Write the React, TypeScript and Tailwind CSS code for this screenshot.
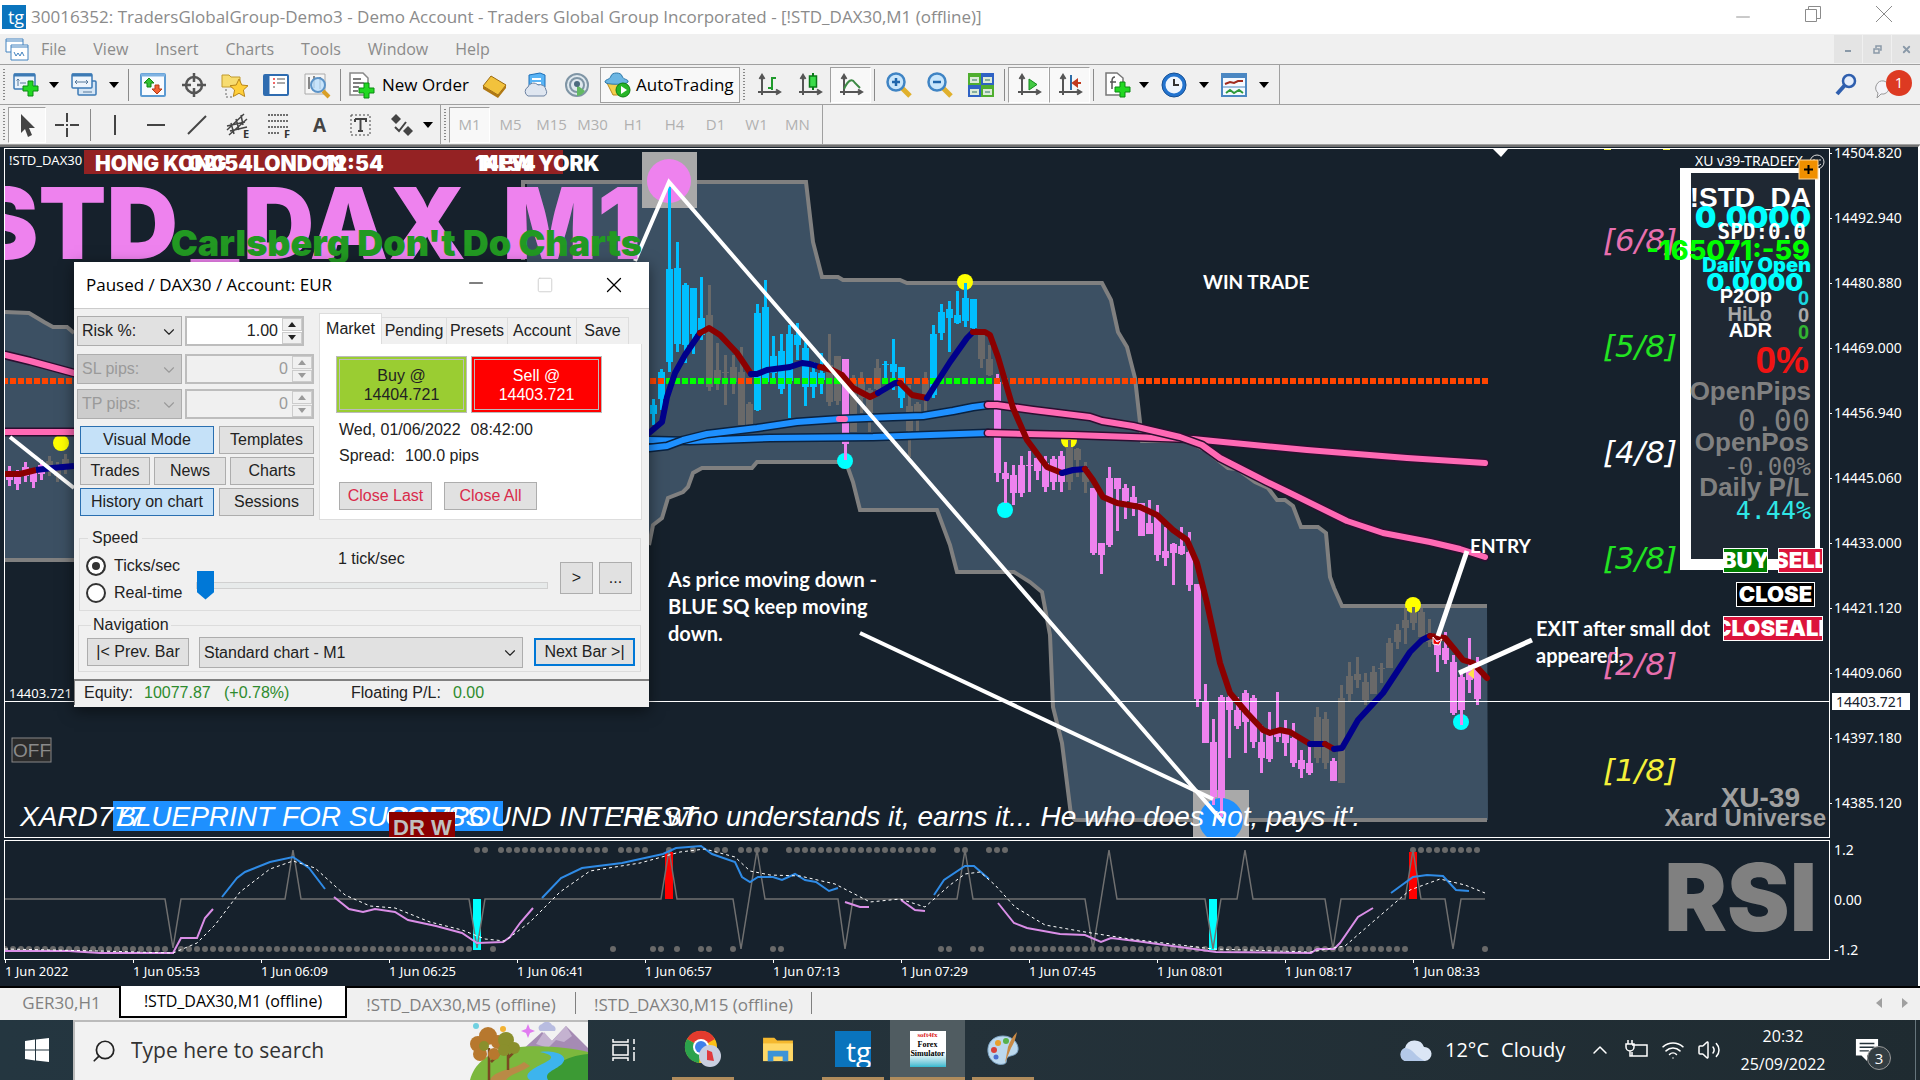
import { ReactNode } from 'react';
import { ChevronDown, ChevronUp, Minus, Search, Square, Volume2, Wifi, X } from 'lucide-react';

/* ---------- chart data ---------- */

const COLORS: Record<string, string> = { c: '#00bfff', g: '#696969', p: '#ee82ee' };

// [kind, high, body top, body bottom, low], one bar every 8px
const candles: [string, number, number, number, number][] = [
    ['c', 399, 405, 414, 425], ['c', 369, 372, 399, 410], ['c', 187, 269, 362, 372], ['c', 242, 268, 344, 352],
    ['c', 283, 285, 345, 363], ['c', 288, 288, 334, 354], ['c', 277, 318, 335, 340], ['g', 285, 315, 387, 391],
    ['g', 343, 370, 380, 390], ['g', 355, 372, 373, 405], ['g', 355, 367, 382, 394], ['g', 347, 372, 425, 425],
    ['g', 402, 404, 425, 425], ['c', 304, 313, 410, 411], ['c', 280, 307, 382, 382], ['c', 336, 356, 373, 378],
    ['c', 334, 351, 389, 394], ['c', 325, 334, 381, 418], ['c', 323, 335, 345, 360], ['c', 342, 348, 387, 406],
    ['c', 362, 372, 387, 398], ['c', 353, 373, 380, 394], ['g', 334, 365, 402, 406], ['g', 356, 356, 401, 405],
    ['p', 359, 359, 444, 460], ['g', 375, 380, 432, 432], ['g', 372, 382, 398, 413], ['g', 388, 390, 422, 432],
    ['g', 359, 368, 389, 393], ['c', 361, 364, 365, 382], ['c', 339, 364, 372, 390], ['c', 367, 367, 398, 408],
    ['g', 385, 406, 431, 457], ['g', 402, 404, 412, 431], ['g', 372, 380, 400, 412], ['c', 325, 334, 395, 398],
    ['c', 304, 312, 333, 340], ['c', 301, 309, 318, 352], ['c', 291, 315, 323, 324], ['c', 283, 298, 321, 327],
    ['c', 299, 299, 328, 332], ['g', 332, 332, 359, 368], ['g', 345, 359, 375, 376], ['p', 374, 382, 473, 482],
    ['p', 462, 473, 479, 503], ['p', 465, 475, 493, 505], ['p', 456, 465, 493, 497], ['p', 451, 465, 466, 492],
    ['p', 455, 458, 471, 480], ['p', 456, 463, 487, 492], ['p', 456, 459, 482, 490], ['p', 451, 456, 482, 492],
    ['g', 440, 447, 482, 490], ['g', 448, 449, 460, 477], ['g', 462, 468, 482, 493], ['p', 488, 488, 553, 555],
    ['p', 543, 543, 555, 574], ['p', 467, 478, 545, 547], ['p', 478, 478, 489, 531], ['p', 484, 488, 501, 519],
    ['p', 486, 497, 503, 516], ['p', 503, 503, 536, 536], ['p', 500, 523, 534, 534], ['p', 505, 517, 555, 561],
    ['p', 527, 551, 558, 566], ['p', 543, 544, 553, 585], ['p', 527, 546, 554, 555], ['p', 532, 552, 585, 591],
    ['p', 584, 584, 699, 707], ['p', 684, 701, 743, 743], ['p', 719, 742, 797, 805], ['p', 695, 697, 798, 817],
    ['p', 692, 697, 710, 758], ['p', 697, 710, 726, 729], ['p', 690, 693, 722, 753], ['p', 695, 698, 742, 748],
    ['p', 725, 742, 758, 773], ['p', 712, 730, 759, 762], ['p', 692, 732, 737, 742], ['p', 720, 730, 743, 756],
    ['p', 723, 738, 763, 767], ['p', 750, 760, 769, 778], ['p', 745, 763, 773, 775], ['g', 707, 717, 758, 763],
    ['g', 712, 719, 763, 769], ['p', 758, 761, 781, 781], ['g', 685, 698, 783, 783], ['g', 662, 676, 694, 702],
    ['g', 657, 674, 680, 688], ['g', 673, 682, 700, 705], ['g', 666, 672, 694, 694], ['g', 663, 668, 669, 683],
    ['g', 638, 643, 668, 668], ['g', 624, 630, 642, 649], ['g', 608, 620, 628, 644], ['g', 607, 613, 623, 630],
    ['g', 608, 612, 637, 638], ['g', 619, 633, 642, 647], ['p', 637, 642, 655, 672], ['p', 632, 648, 660, 664],
    ['p', 655, 662, 713, 715], ['p', 670, 677, 710, 725], ['p', 638, 667, 680, 693], ['p', 657, 667, 699, 705],
];

const CHANNEL_TOP =
    '527,182 806,182 813,242 822,277 838,277 843,280 900,280 907,283 1102,283 1111,300 1118,332 1127,347 1135,378 1140,422 1142,441 1187,441 1205,450 1228,468 1237,469 1255,482 1268,488 1277,500 1285,500 1293,506 1301,527 1318,527 1326,533 1330,577 1334,588 1342,606 1487,606';
const CHANNEL_BOTTOM =
    '1487,820 1075,820 1071,815 1062,743 1053,707 1050,635 1042,592 1030,582 1014,572 957,572 950,545 937,510 860,510 853,482 848,468 843,462 757,462 752,468 702,468 693,473 688,487 683,492 668,498 662,518 653,525 649,545';

const FAST_MA: [string, string][] = [
    ['#00008b', '649,433 662,422 667,397 675,373 685,355 700,333'],
    ['#8b0000', '700,333 709,328 720,335 737,353 751,374'],
    ['#00008b', '751,374 757,374 767,370 790,367 802,363 810,364 820,367'],
    ['#8b0000', '820,367 832,370 842,375 853,388 870,397 878,393'],
    ['#00008b', '878,393 895,383 900,383'],
    ['#8b0000', '900,383 912,395 927,398'],
    ['#00008b', '927,398 950,362 967,338 973,332'],
    ['#8b0000', '973,332 985,332 990,335 998,357 1013,408 1027,440 1047,467 1062,473'],
    ['#00008b', '1062,473 1073,470 1085,469'],
    ['#8b0000', '1085,469 1093,480 1103,497 1117,503 1140,507 1157,515 1173,530 1187,540 1197,563 1207,603 1220,663 1230,693 1247,713 1263,730 1270,733 1280,730 1290,732 1310,744'],
    ['#00008b', '1310,744 1325,744'],
    ['#8b0000', '1325,744 1334,749'],
    ['#00008b', '1334,749 1342,748 1358,720 1383,693 1410,652 1422,640 1430,636'],
    ['#8b0000', '1430,636 1445,638 1455,650 1463,660 1473,663 1487,678'],
];

const SLOW_MA: [string, string][] = [
    ['#1e90ff', '649,440 690,441 770,438 873,437 988,433'],
    ['#ff69b4', '988,433 1073,435 1160,438 1193,439 1213,441 1307,450 1407,458 1485,463'],
    ['#1e90ff', '649,448 667,446 683,440 707,434 757,428 797,422 840,419 893,417 923,416 953,411 973,407 988,405'],
    ['#ff69b4', '988,405 997,405 1033,410 1090,417 1102,421 1133,426 1180,437 1202,445 1220,458 1267,482 1290,493 1347,521 1383,533 1430,542 1460,549 1485,557'],
    ['#ff69b4', '5,355 30,361 74,373'],
    ['#ff69b4', '5,432 74,432'],
];

const RSI_LINES: [string, string][] = [
    ['#da8ee7', '5,951 69,951 100,953 173,953 181,938 197,938 205,918 213,909'],
    ['#2f8be6', '222,897 237,878 245,872 270,862 293,857 309,868 325,889'],
    ['#da8ee7', '334,897 349,909 363,912 375,909 395,912 408,920 436,926 462,933 477,943 503,942 510,937 520,923 533,908'],
    ['#2f8be6', '542,898 561,878 582,868 622,863 663,854 676,848 701,846 712,854 735,862 742,877 750,882 758,877 773,877 782,880 795,874 805,880 816,882 829,891 838,888'],
    ['#da8ee7', '845,902 860,907 869,907'],
    ['#da8ee7', '901,900 915,910 925,911'],
    ['#2f8be6', '934,895 944,880 965,866 974,866 989,879'],
    ['#da8ee7', '998,903 1014,923 1027,928 1060,934 1085,935 1101,942 1111,938 1136,941 1216,952 1311,953 1317,949 1334,949 1340,943 1358,917 1373,908'],
    ['#2f8be6', '1391,893 1413,877 1427,875 1443,876 1456,890 1469,891'],
];

const SIGNAL =
    '5,949 100,951 173,953 197,943 215,925 240,892 270,869 293,861 315,868 345,895 370,906 395,908 430,922 462,930 485,939 505,941 530,922 560,892 590,871 640,863 680,852 705,849 735,857 750,871 770,875 800,876 835,884 870,902 900,899 925,907 950,885 965,874 980,872 995,885 1015,907 1045,925 1085,932 1130,939 1213,949 1310,952 1345,946 1375,920 1410,890 1440,879 1465,885 1485,893';

const SPIKES =
    '5,899 165,899 173,948 181,899 285,899 293,850 301,899 469,899 477,948 485,899 661,899 669,850 677,899 733,899 741,949 757,850 765,899 838,899 845,949 853,899 957,899 965,850 973,899 1085,899 1093,949 1109,850 1117,899 1205,899 1213,949 1221,899 1237,899 1245,850 1253,899 1325,899 1333,949 1341,899 1405,899 1413,850 1421,899 1445,899 1453,949 1461,899 1485,899';

const TOP_DOTS = [[477, 485], [501, 605], [621, 645], [669, 669], [693, 693], [717, 725], [741, 765], [789, 933], [957, 965], [989, 1005], [1413, 1477]];
const BOTTOM_DOTS = [[5, 165], [181, 469], [493, 493], [613, 613], [653, 661], [677, 677], [701, 709], [733, 733], [773, 781], [941, 949], [973, 981], [1013, 1405], [1485, 1485]];

const expand = (ranges: number[][]) => ranges.flatMap(([from, to]) => Array.from({ length: (to - from) / 8 + 1 }, (_, i) => from + i * 8));

const isGreen = (i: number) => (i >= 2 && i <= 10) || (i >= 13 && i <= 23) || i === 29 || i === 30 || (i >= 35 && i <= 42);

const prices = ['14504.820', '14492.940', '14480.880', '14469.000', '14456.940', '14445.060', '14433.000', '14421.120', '14409.060', '14397.180', '14385.120'];
const times = ['1 Jun 2022', '1 Jun 05:53', '1 Jun 06:09', '1 Jun 06:25', '1 Jun 06:41', '1 Jun 06:57', '1 Jun 07:13', '1 Jun 07:29', '1 Jun 07:45', '1 Jun 08:01', '1 Jun 08:17', '1 Jun 08:33'];

const levels = [
    { label: '[6/8]', y: 251, className: 'fill-[#e86fae]' },
    { label: '[5/8]', y: 357, className: 'fill-[#22e322]' },
    { label: '[4/8]', y: 463, className: 'fill-white' },
    { label: '[3/8]', y: 569, className: 'fill-[#22e322]' },
    { label: '[2/8]', y: 675, className: 'fill-[#e86fae]' },
    { label: '[1/8]', y: 781, className: 'fill-[#f4f03a]' },
];

/* ---------- toolbar icons ---------- */

const Icon = ({ children }: { children: ReactNode }) => (
    <svg viewBox="0 0 28 28" className="h-7 w-7 shrink-0" fill="none" aria-hidden="true">
        {children}
    </svg>
);

const Plus = ({ x, y }: { x: number; y: number }) => (
    <path d={`M${x + 5} ${y}h5v5h5v5h-5v5h-5v-5h-5v-5h5z`} fill="#22d822" stroke="#0a8a12" />
);

const Axes = () => <path d="M7 5v19M3 21h21M4.500 8 7 4l2.500 4M21 18.500l4 2.500-4 2.500" stroke="#555" strokeWidth="2" />;

const NewChartIcon = () => (
    <Icon>
        <rect x="2" y="3" width="21" height="15" rx="1" fill="#eaf3fc" stroke="#3c7ab5" strokeWidth="1.500" />
        <path d="M2 4h21" stroke="#3c7ab5" strokeWidth="3" />
        <path d="M6 8v7M4.500 9.500 6 8l1.500 1.500M8 12h6" stroke="#56789a" />
        <Plus x={11} y={10} />
    </Icon>
);
const ProfilesIcon = () => (
    <Icon>
        <rect x="8" y="10" width="18" height="14" rx="1" fill="#d6e6f5" stroke="#3c7ab5" strokeWidth="1.500" />
        <rect x="2" y="3" width="20" height="14" rx="1" fill="#eef5fc" stroke="#3c7ab5" strokeWidth="1.500" />
        <path d="M2 4h20" stroke="#3c7ab5" strokeWidth="3" />
        <path d="M5 11h13M7 9l-2 2 2 2M16 9l2 2-2 2M13 21h9" stroke="#56789a" />
    </Icon>
);
const MarketWatchIcon = () => (
    <Icon>
        <rect x="2" y="3" width="24" height="22" rx="1" fill="#f8fbff" stroke="#5b9ad2" strokeWidth="2" />
        <path d="M2 4h24" stroke="#7fb2e2" strokeWidth="3" />
        <path d="m10 7 5 5h-3v4H8v-4H5z" fill="#33c133" stroke="#128512" />
        <path d="m18 23-5-5h3v-4h4v4h3z" fill="#f26234" stroke="#b53a12" />
    </Icon>
);
const TargetIcon = () => (
    <Icon>
        <circle cx="14" cy="14" r="8" stroke="#555" strokeWidth="2.500" />
        <path d="M14 2v9M14 17v9M2 14h9M17 14h9" stroke="#555" strokeWidth="2.500" />
    </Icon>
);
const NavigatorIcon = () => (
    <Icon>
        <path d="M1 4h7l2 2h9v10H1z" fill="#f7dc70" stroke="#c19a2c" />
        <path d="M5 18v8h6" stroke="#666" strokeDasharray="2 2" />
        <path d="m18 8 2.800 6 6.200.700-4.600 4.300 1.300 6.500-5.700-3.200-5.700 3.200 1.300-6.500L9 14.700l6.200-.700z" fill="#ffcf3a" stroke="#b9861a" />
    </Icon>
);
const TerminalIcon = () => (
    <Icon>
        <rect x="2" y="4" width="24" height="20" rx="1" fill="#fff" stroke="#2f6cb0" strokeWidth="2" />
        <path d="M5 4v20" stroke="#2f6cb0" strokeWidth="5" />
        <path d="M11 8h2M11 12h2" stroke="#e33" strokeWidth="1.500" />
        <path d="M11 16h2M15 8h8M15 12h8" stroke="#555" strokeWidth="1.200" />
    </Icon>
);
const TesterIcon = () => (
    <Icon>
        <path d="M2 3h20v20H2z" fill="#f6f6f6" stroke="#aaa" />
        <path d="M6 6v12M11 5v12M17 6v12" stroke="#888" strokeWidth="2" />
        <circle cx="15" cy="14" r="7" fill="#bfe0fb" fillOpacity=".85" stroke="#5c93c7" strokeWidth="2" />
        <path d="m20 20 6 6" stroke="#d99f26" strokeWidth="4" />
    </Icon>
);
const NewOrderIcon = () => (
    <Icon>
        <path d="M2 2h13l5 5v17H2z" fill="#fff" stroke="#888" strokeWidth="1.500" />
        <path d="M5 8h8M5 12h11M5 16h6M5 20h5" stroke="#555" strokeWidth="1.500" />
        <Plus x={11} y={12} />
    </Icon>
);
const GoldIcon = () => (
    <Icon>
        <path d="m2 15 8-10 15 9-8 10z" fill="#f2c23c" stroke="#9c6a10" />
        <path d="m2 15 15 9v3L2 18zM17 24l8-10v3l-8 10z" fill="#b07812" />
    </Icon>
);
const CloudServerIcon = () => (
    <Icon>
        <path d="M7 4 18 2l5 2v12H7z" fill="#59b4f5" stroke="#1d6fb8" />
        <path d="M10 8h9M10 12h9" stroke="#fff" strokeWidth="2" />
        <path d="M6 25a5 5 0 0 1 0-9 6 6 0 0 1 10-2 6 6 0 0 1 8 5 4 4 0 0 1-2 6z" fill="#dfe6f0" stroke="#6d83a3" />
    </Icon>
);
const SignalIcon = () => (
    <Icon>
        <circle cx="14" cy="14" r="11" fill="#dfe8ee" stroke="#7f95a5" strokeWidth="2" />
        <circle cx="14" cy="14" r="7" stroke="#7f95a5" strokeWidth="2" />
        <path d="M14 14v11a11 11 0 0 0 8-5z" fill="#63b963" />
        <circle cx="14" cy="13" r="3" fill="#4d6b7f" />
    </Icon>
);
const AutoIcon = () => (
    <Icon>
        <path d="M2 10h21l-7 14H9z" fill="#f6cf4c" stroke="#b98a1c" />
        <path d="M1 11c0-3 5-2 6-6s10-4 11 0 7 3 6 6-23 3-23 0z" fill="#6cb6e3" stroke="#2c77a8" />
        <circle cx="19" cy="19" r="7" fill="#27b527" stroke="#0e7d13" />
        <path d="m17 15 6 4-6 4z" fill="#fff" />
    </Icon>
);
const BarsIcon = () => (
    <Icon>
        <Axes />
        <path d="M17 6v13M17 7h4M13 17h4" stroke="#1f9a2c" strokeWidth="2" />
    </Icon>
);
const CandlesIcon = () => (
    <Icon>
        <Axes />
        <path d="M17 2v17" stroke="#0a7a18" strokeWidth="2" />
        <rect x="13.500" y="5" width="7" height="11" fill="#3bdc4a" stroke="#0a7a18" strokeWidth="1.500" />
    </Icon>
);
const LineIcon = () => (
    <Icon>
        <Axes />
        <path d="M7 18c4-9 8-11 11-6l5 5" stroke="#3d8a45" strokeWidth="2" />
    </Icon>
);
const ZoomIcon = ({ plus = false }: { plus?: boolean }) => (
    <Icon>
        <path d="m17 17 8 8" stroke="#e0b02c" strokeWidth="5" />
        <circle cx="11" cy="11" r="8.500" fill="#c9e6fb" stroke="#3f84c4" strokeWidth="2.500" />
        <path d={plus ? 'M7 11h8M11 7v8' : 'M7 11h8'} stroke="#1f66ac" strokeWidth="2.500" />
    </Icon>
);
const TileIcon = () => (
    <Icon>
        <path d="M1 2h13v12H1zM14 14h13v12H14z" fill="#4fae2f" />
        <path d="M14 2h13v12H14zM1 14h13v12H1z" fill="#2f62c4" />
        <path d="M3 6h9v6H3zM16 6h9v6h-9zM3 18h9v6H3zM16 18h9v6h-9z" fill="#dcebd8" />
        <path d="M5 9h5M18 9h5M5 21h5M18 21h5" stroke="#6a9a8a" strokeWidth="1.500" />
    </Icon>
);
const ScrollIcon = () => (
    <Icon>
        <Axes />
        <path d="m14 8 8 5.500-8 5.500z" fill="#43c943" stroke="#148a1e" />
    </Icon>
);
const ShiftIcon = () => (
    <Icon>
        <Axes />
        <path d="M15 4v15" stroke="#2d6da8" strokeWidth="2" />
        <path d="M25 12h-6M21 9l-4 3 4 3z" fill="#d9482b" stroke="#c23a1e" strokeWidth="2" />
    </Icon>
);
const IndicatorIcon = () => (
    <Icon>
        <path d="M2 2h11l6 5v17H2z" fill="#fff" stroke="#777" strokeWidth="1.500" />
        <path d="M11 6c-3 0-3 2-3 4v8M6 11h6" stroke="#555" strokeWidth="1.500" />
        <Plus x={11} y={11} />
    </Icon>
);
const ClockIcon = () => (
    <Icon>
        <circle cx="14" cy="14" r="12" fill="#2374cf" stroke="#164f93" />
        <circle cx="14" cy="14" r="8.500" fill="#eef5fd" />
        <path d="M14 8v6h5" stroke="#333" strokeWidth="2" />
    </Icon>
);
const TemplateIcon = () => (
    <Icon>
        <rect x="2" y="3" width="24" height="22" fill="#f4f9ff" stroke="#4b87c2" strokeWidth="2" />
        <path d="M2 5h24" stroke="#4b87c2" strokeWidth="4" />
        <path d="m5 13 5-2 4 1 4-2 5 0" stroke="#a02a1e" strokeWidth="2" />
        <path d="M2 16h24" stroke="#4b87c2" />
        <path d="m6 22 4-3 4 3 5-3 4 3" stroke="#2f9a3b" strokeWidth="2" />
    </Icon>
);

const drawingTools: [string, ReactNode][] = [
    ['Vertical line', <path key="v" d="M14 4v20" stroke="#444" strokeWidth="2" />],
    ['Horizontal line', <path key="h" d="M5 14h18" stroke="#444" strokeWidth="2" />],
    ['Trendline', <path key="t" d="M5 23 23 5" stroke="#444" strokeWidth="2" />],
    ['Equidistant channel', <g key="e"><path d="M3 19 20 3M5 24 23 8M3 15l18-4M6 20l17-4M7 12l3 11M12 8l3 11M17 4l2 10" stroke="#444" strokeWidth="1.500" /><text x="19" y="27" className="fill-[#333] text-[11px] font-bold">E</text></g>],
    ['Fibonacci', <g key="f"><path d="M3 4h21M3 10h21M3 16h21M3 22h12" stroke="#444" strokeWidth="1.500" strokeDasharray="2 1" /><text x="19" y="27" className="fill-[#333] text-[11px] font-bold">F</text></g>],
    ['Text', <text key="a" x="7" y="21" className="fill-[#444] text-[19px] font-bold">A</text>],
    ['Text label', <g key="l"><rect x="4" y="4" width="19" height="20" stroke="#444" strokeDasharray="2 2" /><path d="M8 8h11v3M8 8v3M13.500 8v12M11 20h5" stroke="#444" strokeWidth="2" /></g>],
    ['Arrows', <g key="s"><path d="m8 3 5 5-5 5-5-5z" fill="#444" /><path d="m20 25-5-5 5-5 5 5z" fill="#444" /><path d="m7 16 4 4 7-9" stroke="#444" strokeWidth="2" /></g>],
];

/* ---------- window chrome ---------- */

const TgLogo = ({ className }: { className: string }) => (
    <span className={`flex items-center justify-center overflow-hidden bg-[#0a74bd] text-white ${className}`}>tg</span>
);

const Tool = ({ label, children, on = false, wide = 'w-[41px]' }: { label: string; children: ReactNode; on?: boolean; wide?: string }) => (
    <button
        aria-label={label}
        className={`flex h-9 shrink-0 items-center justify-center ${wide} ${on ? 'border border-[#a0a0a0] border-r-white border-b-white bg-[#f8f8f8]' : ''}`}
    >
        {children}
    </button>
);

const Caret = () => (
    <button aria-label="More" className="flex w-3 shrink-0 items-center justify-center">
        <svg viewBox="0 0 10 6" className="w-[10px]" aria-hidden="true">
            <path d="M0 0h10L5 6z" />
        </svg>
    </button>
);

const Grip = () => <span className="mx-[3px] h-8 w-[2px] shrink-0 self-center bg-[repeating-linear-gradient(#888_0_1px,#eee_1px_3px)]" />;
const Sep = () => <span className="mx-[3px] h-8 w-px shrink-0 self-center bg-[#8a8a8a]" />;

const TitleBar = () => (
    <header className="flex h-[34px] items-center bg-white text-[#8b8b8b]">
        <TgLogo className="ml-[2px] h-6 w-6 pl-1 text-[18px]" />
        <h1 className="ml-[5px] text-[17px] whitespace-nowrap">
            30016352: TradersGlobalGroup-Demo3 - Demo Account - Traders Global Group Incorporated - [!STD_DAX30,M1 (offline)]
        </h1>
        <div className="ml-auto flex">
            <button aria-label="Minimize" className="flex w-[70px] justify-center"><Minus size={22} strokeWidth={1} /></button>
            <button aria-label="Restore" className="flex w-[70px] justify-center">
                <svg viewBox="0 0 16 16" className="h-4 w-4" fill="none" stroke="currentColor"><path d="M.5 3.500h11v12H.5zM3.500 3V.5h12v12H12" /></svg>
            </button>
            <button aria-label="Close" className="flex w-[72px] justify-center">
                <svg viewBox="0 0 16 16" className="h-4 w-4" stroke="currentColor"><path d="m0 0 16 16M16 0 0 16" /></svg>
            </button>
        </div>
    </header>
);

const MenuBar = () => (
    <nav className="flex h-[31px] items-center border-b border-[#a0a0a0] text-[16px] text-[#8b8b8b]">
        <svg viewBox="0 0 24 24" className="ml-[5px] h-6 w-6" fill="#fff" stroke="#4383c0" aria-hidden="true">
            <path d="M1 2h17v13H1zM1 4h17" />
            <path d="M6 8h17v15H6zM6 10h17" />
            <path d="m9 15 2 4 2-3 2 3 2-4 2 4" fill="none" />
        </svg>
        <ul className="ml-3 flex gap-[27px]">
            {['File', 'View', 'Insert', 'Charts', 'Tools', 'Window', 'Help'].map((item) => (
                <li key={item}><button>{item}</button></li>
            ))}
        </ul>
        <div className="ml-auto flex gap-px text-[#8a99a8]">
            <button aria-label="Minimize chart" className="flex h-7 w-7 items-center justify-center bg-[#e4e4e4]"><span className="mt-1 h-[2px] w-[6px] bg-[#8a99a8]" /></button>
            <button aria-label="Restore chart" className="flex h-7 w-7 items-center justify-center bg-[#e4e4e4]">
                <svg viewBox="0 0 9 9" className="h-[9px] w-[9px]" fill="none" stroke="currentColor" strokeWidth="1.500"><path d="M1 4h5v4H1zM3 3V1h5v4H7" /></svg>
            </button>
            <button aria-label="Close chart" className="flex h-7 w-7 items-center justify-center bg-[#e4e4e4]"><X size={11} strokeWidth={4} /></button>
        </div>
    </nav>
);

const MainToolbar = () => (
    <div className="flex h-10 items-center border-b border-[#a0a0a0] text-[17px] text-black">
        <div className="flex h-full items-center border-r border-[#a0a0a0] pr-[9px]">
            <Grip />
            <Tool label="New chart" wide="w-9"><NewChartIcon /></Tool>
            <span className="w-1" />
            <Caret />
            <Tool label="Profiles" wide="w-12"><ProfilesIcon /></Tool>
            <Caret />
            <span className="w-[5px]" />
            <Sep />
            <Tool label="Market Watch"><MarketWatchIcon /></Tool>
            <Tool label="Data Window"><TargetIcon /></Tool>
            <Tool label="Navigator"><NavigatorIcon /></Tool>
            <Tool label="Terminal"><TerminalIcon /></Tool>
            <Tool label="Strategy Tester"><TesterIcon /></Tool>
            <Sep />
            <button className="flex w-[130px] items-center gap-[6px] pl-1 whitespace-nowrap"><NewOrderIcon />New Order</button>
            <Tool label="MetaEditor"><GoldIcon /></Tool>
            <Tool label="Virtual hosting"><CloudServerIcon /></Tool>
            <Tool label="Signals"><SignalIcon /></Tool>
            <button className="ml-[3px] flex h-9 w-[140px] items-center gap-[4px] border border-[#a0a0a0] bg-[#f8f8f8] pl-[3px] whitespace-nowrap"><AutoIcon />AutoTrading</button>
            <Grip />
            <Tool label="Bar chart"><BarsIcon /></Tool>
            <Tool label="Candlesticks"><CandlesIcon /></Tool>
            <Tool label="Line chart" on><LineIcon /></Tool>
            <Sep />
            <Tool label="Zoom in"><ZoomIcon plus /></Tool>
            <Tool label="Zoom out"><ZoomIcon /></Tool>
            <Tool label="Tile windows"><TileIcon /></Tool>
            <Sep />
            <Tool label="Auto scroll" on><ScrollIcon /></Tool>
            <Tool label="Chart shift" on><ShiftIcon /></Tool>
            <Sep />
            <Tool label="Indicators"><IndicatorIcon /></Tool>
            <Caret />
            <Tool label="Periods" wide="w-12"><ClockIcon /></Tool>
            <Caret />
            <Tool label="Templates" wide="w-12"><TemplateIcon /></Tool>
            <Caret />
        </div>
        <div className="ml-auto flex items-center pr-2">
            <button aria-label="Search">
                <svg viewBox="0 0 24 24" className="h-6 w-6" fill="none" stroke="#2f5fae"><circle cx="15" cy="8" r="6" strokeWidth="2.500" fill="#e6eefb" /><path d="m11 12-8 9" strokeWidth="4" /></svg>
            </button>
            <button aria-label="Alerts" className="ml-4 flex items-center">
                <svg viewBox="0 0 20 20" className="mt-2 -mr-2 h-5 w-5" fill="#f4f4f8" stroke="#999"><path d="M10 2a8 7 0 0 1 0 13H7l-4 4 1-5a7 7 0 0 1 6-12z" /></svg>
                <span className="relative mb-1 flex h-[26px] w-[26px] items-center justify-center rounded-full bg-[#dd3a22] text-[15px] text-white">1</span>
            </button>
        </div>
    </div>
);

const DrawToolbar = () => (
    <div className="flex h-10 items-center border-b border-[#a0a0a0]">
        <div className="flex h-full items-center border-r border-[#a0a0a0] pr-[6px]">
            <Grip />
            <Tool label="Cursor" on wide="w-[38px]">
                <Icon><path d="M8 3v19l4-4 3 8 4-2-3-7h6z" fill="#444" /></Icon>
            </Tool>
            <Tool label="Crosshair">
                <Icon><path d="M14 2v9M14 17v9M2 14h9M17 14h9M14 13v2" stroke="#444" strokeWidth="2" /></Icon>
            </Tool>
            <Sep />
            {drawingTools.map(([label, art]) => (
                <Tool key={label} label={label}><Icon>{art}</Icon></Tool>
            ))}
            <Caret />
        </div>
        <div className="flex h-full items-center border-r border-[#a0a0a0] pr-1 text-[15px] text-[#b0b0b0]">
            <Grip />
            {['M1', 'M5', 'M15', 'M30', 'H1', 'H4', 'D1', 'W1', 'MN'].map((tf) => (
                <Tool key={tf} label={tf} on={tf === 'M1'}>{tf}</Tool>
            ))}
        </div>
    </div>
);

/* ---------- chart ---------- */

const Dot = ({ x, y, fill }: { x: number; y: number; fill: string }) => <circle cx={x} cy={y} r="8" fill={fill} />;

const MainPlot = () => (
    <svg className="absolute inset-0 h-full w-full font-['Liberation_Sans',sans-serif]" fill="none" aria-label="!STD_DAX30 price chart">
        <g transform="translate(-5 -149)">
            <polygon points={`${CHANNEL_TOP} 1488,820 ${CHANNEL_BOTTOM} 527,545`} fill="#3c5063" />
            <polygon points="5,312 29,313 44,322 53,327 67,327 90,340 90,560 5,560" fill="#3c5063" />
            <polyline points="5,312 29,313 44,322 53,327 67,327 74,333" stroke="#808080" strokeWidth="4" />
            <polyline points="5,560 74,560" stroke="#808080" strokeWidth="4" />
            <polyline points={CHANNEL_TOP} stroke="#808080" strokeWidth="4" />
            <polyline points={CHANNEL_BOTTOM} stroke="#808080" strokeWidth="4" />
            <path d="M523 260V182h6" stroke="#808080" strokeWidth="4" />

            <rect x="642" y="152" width="55" height="56" fill="#a9a9a9" />
            <circle cx="669" cy="181" r="22" fill="#ee82ee" />
            <rect x="1193" y="790" width="56" height="50" fill="#a9a9a9" />
            <circle cx="1221" cy="820" r="22" fill="#1e90ff" />

            <Dot x={965} y={282} fill="#ffff00" />
            <Dot x={1069} y={440} fill="#ffff00" />
            <Dot x={1413} y={605} fill="#ffff00" />
            <Dot x={61} y={443} fill="#ffff00" />
            <Dot x={845} y={461} fill="#00ffff" />
            <Dot x={1005} y={510} fill="#00ffff" />
            <Dot x={1461} y={722} fill="#00ffff" />

            {candles.map(([kind, high, top, bottom, low], i) => (
                <g key={i} fill={COLORS[kind]}>
                    <rect x={652 + i * 8} y={high} width="3" height={low - high} />
                    <rect x={650 + i * 8} y={top} width="7" height={bottom - top} />
                </g>
            ))}
            {[466, 470, 462, 468, 460, 456, 462, 454].map((y, i) => (
                <g key={i} fill={i < 5 ? '#ee82ee' : '#696969'}>
                    <rect x={8 + i * 8} y={y} width="3" height="20" />
                    <rect x={6 + i * 8} y={y + 5} width="7" height="9" />
                </g>
            ))}

            {Array.from({ length: 186 }, (_, i) => i - 81).map((i) => (
                <rect key={i} x={650 + i * 8} y="378" width="6" height="6" fill={isGreen(i) ? '#00ff00' : '#ff4500'} />
            ))}

            {SLOW_MA.map(([color, points]) => (
                <g key={points} strokeLinejoin="round" strokeLinecap="round">
                    <polyline points={points} stroke={color === '#1e90ff' ? '#0a2240' : '#2c0f30'} strokeWidth="9" />
                    <polyline points={points} stroke={color} strokeWidth="6" />
                </g>
            ))}
            <path d="M839 419h6" stroke="#ff69b4" strokeWidth="6" strokeLinecap="round" />
            {FAST_MA.map(([color, points]) => (
                <polyline key={points} points={points} stroke={color} strokeWidth="6" strokeLinecap="round" strokeLinejoin="round" />
            ))}
            <polyline points="5,474 20,474 36,470" stroke="#8b0000" strokeWidth="6" />
            <polyline points="36,470 52,468 74,466" stroke="#00008b" strokeWidth="6" />

            <path d="M5 701.500h1825" stroke="#fff" />
            <g stroke="#fff" strokeWidth="4">
                <path d="M635 261 669 182 1223 822" />
                <path d="M10 437 74 488" />
                <path d="m860 633 353 166" />
                <path d="m1467 551-29 85" strokeWidth="5" />
                <path d="m1459 673 73-33" strokeWidth="5" />
            </g>
            <path d="m1433 637 4 5 5-3-3 6-6-1z" fill="#e00" stroke="#fff" />
            <path d="m1474 668-6 6 6 5z" fill="#ffe34d" />
            <path d="M1493 149h15l-7 8z" fill="#fff" />
            <path d="M1604 149h7M1663 149h7" stroke="#f4f03a" strokeWidth="2" />

            <g className="fill-[#ee82ee] font-['Inter',sans-serif] text-[99px] font-black">
                <text x="178" y="259" textAnchor="end">!STD</text>
                <text x="466" y="259" textAnchor="end">_DAX</text>
                <text x="642" y="259" textAnchor="end">M1</text>
            </g>
            <text x="642" y="256" textAnchor="end" className="fill-[#229922] font-['Inter',sans-serif] text-[36px] font-black">Carlsberg Don't Do Charts</text>

            <text x="9" y="165" className="fill-white font-['Noto_Sans',sans-serif] text-[13px]">!STD_DAX30</text>
            <rect x="84" y="150" width="479" height="24" fill="#942223" />
            <g className="fill-white font-['Inter',sans-serif] text-[21px] font-black">
                <text x="95" y="171">HONG KONG</text>
                <text x="188" y="171">02:54</text>
                <text x="253" y="171">LONDON</text>
                <text x="324" y="171">12:54</text>
                <text x="475" y="171">14:54</text>
                <text x="482" y="171">NEW YORK</text>
            </g>

            <g className="fill-white font-['Lato',sans-serif] text-[20px] font-bold">
                <text x="1203" y="289" className="text-[19px]">WIN TRADE</text>
                <text x="668" y="587">As price moving down -</text>
                <text x="668" y="614">BLUE SQ keep moving</text>
                <text x="668" y="641">down.</text>
                <text x="1470" y="553" className="text-[19px]">ENTRY</text>
                <text x="1536" y="636">EXIT after small dot</text>
                <text x="1536" y="663">appeared,</text>
            </g>

            <g className="font-['DejaVu_Sans',sans-serif] text-[31px] italic">
                {levels.map(({ label, y, className }) => (
                    <text key={label} x="1603" y={y} className={className}>{label}</text>
                ))}
            </g>

            <text x="9" y="698" className="fill-white font-['Noto_Sans',sans-serif] text-[13px]">14403.721</text>
            <rect x="12" y="738" width="39" height="24" fill="#2b2b2b" stroke="#888" />
            <text x="13" y="757" className="fill-[#8a8a8a] text-[19px]">OFF</text>
            <rect x="113" y="801" width="390" height="30" fill="#1e90ff" />
            <g className="fill-white text-[28px] italic">
                <text x="20" y="826">XARD777</text>
                <text x="117" y="826">BLUEPRINT FOR SUCCESS</text>
                <text x="385" y="826">COMPOUND INTEREST</text>
                <text x="618" y="826">'He who understands it, earns it... He who does not, pays it'.</text>
            </g>
            <rect x="389" y="812" width="66" height="30" fill="#8b0000" />
            <text x="393" y="835" className="fill-[#c0c0c0] text-[22px] font-bold">DR W</text>

            <path d="M1680 168h140v402h-140z" fill="#fff" />
            <path d="M1691 173h124v386h-124z" fill="#1f2833" />
            <text x="1695" y="166" className="fill-white font-['Noto_Sans',sans-serif] text-[14px]">XU v39-TRADEFX</text>
            <g stroke="#ddd">
                <circle cx="1817" cy="162" r="7" />
                <path d="M1813 164q4 4 8 0M1814 159v2M1820 159v2" />
            </g>
            <rect x="1799" y="160" width="19" height="19" fill="#f09000" stroke="#ffd9a0" />
            <path d="M1804 169.500h9M1808.500 165v9" stroke="#000" strokeWidth="2" />
            <g textAnchor="end">
                <text x="1811" y="207" className="fill-white text-[28px] font-bold">!STD_DA</text>
                <g className="fill-[#00ffff] font-['Inter',sans-serif] font-black">
                    <text x="1811" y="228" className="text-[30px]">0.0000</text>
                    <text x="1811" y="272" className="text-[20px]">Daily Open</text>
                    <text x="1803" y="291" className="text-[25px]">0.0000</text>
                </g>
                <text x="1806" y="239" className="fill-white font-['DejaVu_Sans_Mono',monospace] text-[21px] font-bold">SPD:0.0</text>
                <text x="1810" y="260" className="fill-[#00ff00] font-['Inter',sans-serif] text-[27px] font-extrabold">-165071:-59</text>
                <g className="text-[20px] font-bold">
                    <text x="1772" y="303" className="fill-white">P2Op</text>
                    <text x="1772" y="321" className="fill-[#a9a9a9]">HiLo</text>
                    <text x="1772" y="337" className="fill-white">ADR</text>
                    <text x="1809" y="305" className="fill-[#19d7e0]">0</text>
                    <text x="1809" y="322" className="fill-[#a9a9a9]">0</text>
                    <text x="1809" y="339" className="fill-[#32b432]">0</text>
                </g>
                <text x="1809" y="373" className="fill-[#f01414] text-[37px] font-bold">0%</text>
                <g className="fill-[#808080] text-[26px] font-bold">
                    <text x="1811" y="400">OpenPips</text>
                    <text x="1809" y="451">OpenPos</text>
                    <text x="1809" y="496">Daily P/L</text>
                </g>
                <g className="font-['DejaVu_Sans_Mono',monospace]">
                    <text x="1810" y="431" className="fill-[#808080] text-[30px]">0.00</text>
                    <text x="1811" y="475" className="fill-[#808080] text-[24px]">-0.00%</text>
                    <text x="1811" y="519" className="fill-[#2fe6e6] text-[25px]">4.44%</text>
                </g>
                <g className="fill-[#a0a0a0] font-bold">
                    <text x="1800" y="807" className="text-[28px]">XU-39</text>
                    <text x="1826" y="826" className="text-[24px]">Xard Universe</text>
                </g>
            </g>
        </g>
    </svg>
);

const ChartButton = ({ children, className }: { children: string; className: string }) => (
    <button className={`flex h-[25px] items-center justify-center overflow-hidden border border-white font-['Inter',sans-serif] text-[22px] font-black text-white ${className}`}>
        {children}
    </button>
);

const OrderButtons = () => (
    <div className="absolute top-[399px] right-[6px] flex flex-col items-end gap-[9px]">
        <div className="flex gap-[10px]">
            <ChartButton className="w-[45px] bg-[#008000]">BUY</ChartButton>
            <ChartButton className="w-[45px] bg-[#dc143c]">SELL</ChartButton>
        </div>
        <ChartButton className="mr-2 w-[79px] bg-black">CLOSE</ChartButton>
        <ChartButton className="w-[100px] bg-[#dc143c]">CLOSEALL</ChartButton>
    </div>
);

const RsiPlot = () => (
    <svg className="absolute inset-0 h-full w-full" fill="none" aria-label="RSI indicator">
        <g transform="translate(-5 -841)">
            <g fill="#696969">
                {expand(TOP_DOTS).map((x) => <circle key={x} cx={x} cy="850" r="3" />)}
                {expand(BOTTOM_DOTS).map((x) => <circle key={x} cx={x} cy="949" r="3" />)}
            </g>
            <path d="M477 899v51M1213 899v51" stroke="#00ffff" strokeWidth="8" />
            <path d="M669 852v47M1413 852v47" stroke="#ff0000" strokeWidth="8" />
            <polyline points={SPIKES} stroke="#707070" strokeWidth="1.500" />
            {RSI_LINES.map(([color, points]) => (
                <polyline key={points} points={points} stroke={color} strokeWidth="2" />
            ))}
            <polyline points={SIGNAL} stroke="#fff" strokeDasharray="3 3" />
            <text x="1817" y="931" textAnchor="end" className="fill-[#808080] font-['Inter',sans-serif] text-[94px] font-black">RSI</text>
        </g>
    </svg>
);

/* ---------- simulator dialog ---------- */

const Btn = ({ children, className }: { children: ReactNode; className: string }) => (
    <button className={`h-7 border whitespace-nowrap ${className}`}>{children}</button>
);
const PLAIN = 'border-[#adadad] bg-[#e1e1e1]';
const ACTIVE = 'border-[#2a6fb0] bg-[#c5e1f8]';

const Pick = ({ label, children, className }: { label: string; children: string; className: string }) => (
    <div className={`relative border border-[#adadad] ${className}`}>
        <select aria-label={label} className="h-full w-full appearance-none bg-transparent pl-1 outline-none">
            <option>{children}</option>
        </select>
        <ChevronDown size={18} strokeWidth={1.5} className="pointer-events-none absolute top-[6px] right-[3px]" />
    </div>
);

const Spin = ({ label, value, className }: { label: string; value: string; className: string }) => (
    <div className={`flex h-[30px] items-center border-2 border-[#bdbdbd] ${className}`}>
        <input aria-label={label} defaultValue={value} className="w-full min-w-0 bg-transparent pr-1 text-right outline-none" />
        <span className="flex w-5 shrink-0 flex-col gap-px self-stretch">
            <span className="flex flex-1 items-center justify-center border border-[#ccc] bg-[#f0f0f0]"><svg viewBox="0 0 8 5" className="w-2" fill="currentColor"><path d="m0 5 4-5 4 5z" /></svg></span>
            <span className="flex flex-1 items-center justify-center border border-[#ccc] bg-[#f0f0f0]"><svg viewBox="0 0 8 5" className="w-2" fill="currentColor"><path d="M0 0h8L4 5z" /></svg></span>
        </span>
    </div>
);

const Simulator = () => (
    <section
        aria-label="Simulator"
        className="absolute top-[113px] left-[69px] w-[575px] bg-[#f0f0f0] pb-[2px] font-['Liberation_Sans',sans-serif] text-[16px] text-[#222] shadow-[0_4px_14px_rgba(0,0,0,0.5)]"
    >
        <header className="flex h-[47px] items-center border-b border-[#ccc] bg-white pl-3 font-['Open_Sans',sans-serif] text-black">
            <h2 className="text-[17px]">Paused / DAX30 / Account: EUR</h2>
            <div className="ml-auto flex">
                <button aria-label="Minimize" className="flex w-[69px] justify-center"><Minus size={22} strokeWidth={1.2} /></button>
                <button aria-label="Maximize" disabled className="flex w-[69px] items-center justify-center text-[#ccc]"><Square size={18} strokeWidth={1.2} /></button>
                <button aria-label="Close" className="flex w-[70px] justify-center"><X size={26} strokeWidth={1.2} /></button>
            </div>
        </header>

        <div className="flex pt-1 pl-[3px]">
            <div className="flex w-[242px] flex-col pt-[3px]">
                <div className="flex gap-[3px]">
                    <Pick label="Risk" className="h-[30px] w-[105px] bg-[#e1e1e1]">Risk %:</Pick>
                    <Spin label="Risk value" value="1.00" className="w-[119px] bg-white" />
                </div>
                <div className="mt-2 flex gap-[3px] text-[#9a9a9a]">
                    <Pick label="Stop loss" className="h-[30px] w-[105px] bg-[#ccc]">SL pips:</Pick>
                    <Spin label="Stop loss value" value="0" className="w-[129px]" />
                </div>
                <div className="mt-[5px] flex gap-[3px] text-[#9a9a9a]">
                    <Pick label="Take profit" className="h-[30px] w-[105px] bg-[#ccc]">TP pips:</Pick>
                    <Spin label="Take profit value" value="0" className="w-[129px]" />
                </div>
                <div className="mt-[7px] flex flex-col gap-[3px] pl-[3px]">
                    <div className="flex gap-[5px]">
                        <Btn className={`w-[134px] ${ACTIVE}`}>Visual Mode</Btn>
                        <Btn className={`w-[95px] ${PLAIN}`}>Templates</Btn>
                    </div>
                    <div className="flex gap-[4px]">
                        <Btn className={`w-[70px] ${PLAIN}`}>Trades</Btn>
                        <Btn className={`w-[72px] ${PLAIN}`}>News</Btn>
                        <Btn className={`w-[84px] ${PLAIN}`}>Charts</Btn>
                    </div>
                    <div className="flex gap-[5px]">
                        <Btn className={`w-[134px] ${ACTIVE}`}>History on chart</Btn>
                        <Btn className={`w-[95px] ${PLAIN}`}>Sessions</Btn>
                    </div>
                </div>
            </div>

            <div className="flex w-[323px] flex-col">
                <div role="tablist" className="flex items-end">
                    <button role="tab" aria-selected="true" className="h-[31px] w-[63px] border border-b-0 border-[#ddd] bg-white">Market</button>
                    {[['Pending', 'w-[65px]'], ['Presets', 'w-[61px]'], ['Account', 'w-[69px]'], ['Save', 'w-[52px]']].map(([tab, width]) => (
                        <button key={tab} role="tab" aria-selected="false" className={`h-[27px] border border-b-0 border-l-0 border-[#ddd] ${width}`}>{tab}</button>
                    ))}
                </div>
                <div className="h-[176px] border border-t-0 border-[#ddd] bg-white px-4 pt-3">
                    <div className="flex gap-1 leading-[19px]">
                        <button className="h-[57px] w-[131px] border-4 border-double border-[#bbb] bg-[#9acd32] text-[#222]">Buy @<br />14404.721</button>
                        <button className="h-[57px] w-[131px] border-4 border-double border-[#bbb] bg-[#ff0000] text-white">Sell @<br />14403.721</button>
                    </div>
                    <p className="mt-[7px] flex gap-[10px] pl-[3px] leading-5"><span>Wed, 01/06/2022</span> <span>08:42:00</span></p>
                    <p className="mt-[6px] flex gap-[10px] pl-[3px] leading-5"><span>Spread:</span> <span>100.0 pips</span></p>
                    <div className="mt-4 flex gap-3 pl-[3px] text-[#d92b4b]">
                        <Btn className={`w-[93px] ${PLAIN}`}>Close Last</Btn>
                        <Btn className={`w-[93px] ${PLAIN}`}>Close All</Btn>
                    </div>
                </div>
            </div>
        </div>

        <fieldset className="mt-[8px] mr-2 ml-[5px] flex h-[83px] border border-[#dcdcdc]">
            <legend className="ml-2 px-1 leading-[20px]">Speed</legend>
            <div className="flex w-[116px] flex-col gap-[7px] pt-2 pl-[6px]">
                {['Ticks/sec', 'Real-time'].map((mode, i) => (
                    <label key={mode} className="flex items-center gap-2 leading-5">
                        <input type="radio" name="speed" defaultChecked={i === 0} className="h-5 w-5 appearance-none rounded-full border-2 border-[#333] bg-white checked:bg-[#333] checked:shadow-[inset_0_0_0_4px_white]" />
                        {mode}
                    </label>
                ))}
            </div>
            <div className="w-[352px]">
                <label htmlFor="speed" className="block pt-px pl-[142px] leading-5">1 tick/sec</label>
                <input
                    id="speed"
                    type="range"
                    defaultValue={0}
                    className="block h-8 w-full appearance-none bg-transparent [&::-webkit-slider-runnable-track]:h-[7px] [&::-webkit-slider-runnable-track]:border [&::-webkit-slider-runnable-track]:border-[#d0d0d0] [&::-webkit-slider-runnable-track]:bg-[#e7eaea] [&::-webkit-slider-thumb]:-mt-3 [&::-webkit-slider-thumb]:h-[29px] [&::-webkit-slider-thumb]:w-[17px] [&::-webkit-slider-thumb]:appearance-none [&::-webkit-slider-thumb]:bg-[#0078d7] [&::-webkit-slider-thumb]:[clip-path:polygon(0_0,100%_0,100%_75%,50%_100%,0_75%)]"
                />
            </div>
            <div className="ml-3 flex gap-[6px] pt-[14px]">
                <button className={`h-8 w-[33px] border ${PLAIN}`}>&gt;</button>
                <button className={`h-8 w-[33px] border ${PLAIN}`}>...</button>
            </div>
        </fieldset>

        <fieldset className="mt-[4px] mr-2 ml-[4px] flex h-[57px] border border-[#dcdcdc] pl-2">
            <legend className="ml-1 px-[2px] leading-[20px]">Navigation</legend>
            <Btn className={`mt-[3px] w-[102px] ${PLAIN}`}>|&lt; Prev. Bar</Btn>
            <Pick label="Chart" className="mt-[2px] ml-[10px] h-[31px] w-[324px] bg-[#e1e1e1]">Standard chart - M1</Pick>
            <button className="mt-[3px] ml-[11px] h-7 w-[101px] border-2 border-[#0078d7] bg-[#e1e1e1] whitespace-nowrap">Next Bar &gt;|</button>
        </fieldset>

        <footer className="mt-[7px] flex h-[26px] items-center border-t-2 border-l border-[#808080] pl-[9px] text-[#222]">
            <span className="w-[60px]">Equity:</span>
            <span className="w-[80px] text-[#2e8b2e]">10077.87</span>
            <span className="w-[127px] text-[#2e8b2e]">(+0.78%)</span>
            <span className="w-[102px]">Floating P/L:</span>
            <span className="text-[#2e8b2e]">0.00</span>
        </footer>
    </section>
);

const ChartWindow = () => (
    <main className="flex flex-1 flex-col border-t-2 border-r-2 border-[#707070] border-r-white bg-[#16212c] pt-px font-['Noto_Sans',sans-serif] text-[14px] text-white">
        <div className="flex min-h-[690px] flex-1 pl-1">
            <div className="relative flex-1 overflow-hidden border border-white">
                <MainPlot />
                <OrderButtons />
                <Simulator />
            </div>
            <div className="relative -mt-[3px] w-[88px]">
                <ul>
                    {prices.map((price) => (
                        <li key={price} className="flex h-[65px] items-start leading-4 last:h-6"><span className="mt-2 mr-[2px] h-px w-[2px] bg-white" />{price}</li>
                    ))}
                </ul>
                <p className="absolute top-[548px] left-[2px] w-[78px] bg-white pl-1 leading-[17px] text-[#16212c]">14403.721</p>
            </div>
        </div>
        <div className="mt-[2px] flex h-[120px] pl-1">
            <div className="relative flex-1 overflow-hidden border border-white">
                <RsiPlot />
            </div>
            <div className="flex w-[88px] flex-col justify-between pl-1 leading-5">
                <span>1.2</span>
                <span>0.00</span>
                <span>-1.2</span>
            </div>
        </div>
        <div className="flex h-[26px] overflow-hidden pl-[5px] text-[13px] leading-[22px] whitespace-nowrap">
            {times.map((time) => (
                <span key={time} className="relative w-[128px] shrink-0">
                    <i className="absolute top-0 left-0 h-[3px] w-px bg-white" />
                    {time}
                </span>
            ))}
        </div>
    </main>
);

const ChartTabs = () => (
    <nav className="flex h-[34px] items-stretch border-t-2 border-black bg-[#f0f0f0] pb-[2px] text-[17px] whitespace-nowrap text-[#808080]">
        <button className="w-[119px] pr-4 pl-[20px]">GER30,H1</button>
        <button className="-mt-[2px] w-[228px] border-2 border-t-0 border-black bg-white text-[16px] text-black">!STD_DAX30,M1 (offline)</button>
        <button className="my-1 w-[229px] border-r border-[#808080]">!STD_DAX30,M5 (offline)</button>
        <button className="my-1 w-[236px] border-r border-[#808080]">!STD_DAX30,M15 (offline)</button>
        <div className="ml-auto flex items-center gap-5 pr-3">
            <button aria-label="Scroll left"><svg viewBox="0 0 6 10" className="h-[10px]" fill="#a0a0a0"><path d="M6 0v10L0 5z" /></svg></button>
            <button aria-label="Scroll right"><svg viewBox="0 0 6 10" className="h-[10px]" fill="#a0a0a0"><path d="M0 0v10l6-5z" /></svg></button>
        </div>
    </nav>
);

/* ---------- taskbar ---------- */

const Landscape = () => (
    <svg viewBox="0 0 118 58" className="h-[58px] w-[118px]" aria-hidden="true">
        <path d="M50 30 72 10l10 9L96 4l22 22v14H50z" fill="#a58bb4" />
        <path d="m66 22 8-12 8 9 14-15 6 10-8 6-8-2-8 8z" fill="#c4b2d0" />
        <path d="M0 58c4-16 18-28 40-32 30-4 60 0 78 4v28z" fill="#7cb83d" />
        <path d="M74 58c4-12 20-24 44-26v26z" fill="#3c9a34" />
        <path d="M60 58c-8-6 4-12 16-18 10-5 4-8-6-10 16-2 30 4 22 12-8 7-18 8-14 16z" fill="#3db4ee" />
        <path d="M20 58c4-10 24-10 34-18l6 4c-8 6-20 8-24 14z" fill="#b98a46" />
        <path d="M19 58V26M21 40l8-8M38 48V24M38 36l6-6" stroke="#7a4a22" strokeWidth="2.500" />
        <g fill="#b7782e">
            <circle cx="8" cy="22" r="8" /><circle cx="18" cy="14" r="9" /><circle cx="28" cy="20" r="7" /><circle cx="10" cy="32" r="7" /><circle cx="24" cy="32" r="6" />
        </g>
        <g fill="#8a8f2c">
            <circle cx="36" cy="18" r="8" /><circle cx="44" cy="26" r="6" /><circle cx="34" cy="28" r="6" /><circle cx="14" cy="24" r="5" />
        </g>
        <circle cx="6" cy="4" r="3" fill="#6fd0e0" />
        <circle cx="33" cy="7" r="3" fill="#f2b233" />
        <path d="m58 2 2 5 5 2-5 2-2 5-2-5-5-2 5-2z" fill="#e07bf0" />
        <path d="M70 9a4 4 0 0 1 2-7 6 6 0 0 1 10 1 4 4 0 0 1 3 6z" fill="#b8bce0" />
    </svg>
);

const TaskButton = ({ label, children, open = false, active = false }: { label: string; children: ReactNode; open?: boolean; active?: boolean }) => (
    <button aria-label={label} className={`flex h-full w-[75px] flex-col items-center ${active ? 'bg-[#505c61]' : ''}`}>
        <span className="flex flex-1 items-center">{children}</span>
        <span className={`h-[3px] ${active ? 'w-full' : 'w-[62px]'} ${open ? 'bg-[#b08c5c]' : ''}`} />
    </button>
);

const Taskbar = () => (
    <footer className="flex h-[60px] items-center bg-linear-to-r from-[#243640] via-[#24323a] to-[#1f2b31] text-white">
        <button aria-label="Start" className="flex w-[73px] justify-center">
            <svg viewBox="0 0 24 24" className="h-6 w-6" fill="#fff"><path d="m0 3 10-1.500V11.500H0zM11 1.400 24 0v11.500H11zM0 12.500h10v10L0 21zM11 12.500h13V24l-13-1.600z" /></svg>
        </button>
        <label className="flex h-full w-[515px] items-center border-2 border-r-0 border-b-0 border-[#bbb] bg-[#f2f2f2] pl-4 text-[#222]">
            <Search size={26} strokeWidth={1.6} className="-scale-x-100" />
            <input placeholder="Type here to search" aria-label="Search" className="ml-[14px] min-w-0 flex-1 bg-transparent text-[21px] outline-none placeholder:text-[#333]" />
            <Landscape />
        </label>
        <button aria-label="Task view" className="flex w-[72px] justify-center">
            <svg viewBox="0 0 24 24" className="h-6 w-6" fill="none" stroke="#fff" strokeWidth="1.500"><path d="M1 1v3h15V1M1 23v-3h15v3M1 7h15v10H1zM22 1v5M22 9v3M22 14v9" /></svg>
        </button>
        <span className="w-[5px]" />
        <TaskButton label="Chrome" open>
            <svg viewBox="0 0 38 38" className="h-[38px] w-[38px]">
                <circle cx="17" cy="17" r="16" fill="#fbc116" />
                <path d="M17 17 3 9a16 16 0 0 1 28 0z" fill="#e33b2e" />
                <path d="M17 17 3 9a16 16 0 0 0 12 24z" fill="#2ba24c" />
                <circle cx="17" cy="17" r="8" fill="#fff" />
                <circle cx="17" cy="17" r="6" fill="#3f7fea" />
                <circle cx="26" cy="26" r="11" fill="#c9cfe0" />
                <path d="m23 20 5 2 2 9-7-1z" fill="#e0393c" />
            </svg>
        </TaskButton>
        <TaskButton label="File Explorer">
            <svg viewBox="0 0 34 30" className="h-[28px] w-[34px]">
                <path d="M1 3h12l3 3h17v21H1z" fill="#f5b82e" />
                <path d="M1 9h32v19H1z" fill="#ffd867" />
                <path d="M6 17h22v11h-6v-5H12v5H6z" fill="#3d93d6" />
            </svg>
        </TaskButton>
        <TaskButton label="Traders Global" open><TgLogo className="h-9 w-9 pt-1 pl-3 text-[28px]" /></TaskButton>
        <TaskButton label="Forex Simulator" open active>
            <span className="flex h-9 w-9 flex-col items-center overflow-hidden bg-linear-to-b from-white from-60% to-[#2fb9cf] font-['Liberation_Serif',serif] text-[8px] leading-[9px] font-bold text-black">
                <b className="text-[7px] text-[#d22]">soft4fx</b>
                <span>Forex</span>
                <span>Simulator</span>
            </span>
        </TaskButton>
        <TaskButton label="Paint" open>
            <svg viewBox="0 0 36 36" className="h-9 w-9">
                <path d="M18 5C8 5 2 12 3 21s9 14 16 12c4-1 1-5 4-7s9-1 10-7S28 5 18 5z" fill="#bcd9ee" stroke="#7fa5c4" />
                <circle cx="9" cy="19" r="3" fill="#d9413a" /><circle cx="13" cy="12" r="3" fill="#e8a02d" /><circle cx="21" cy="10" r="3" fill="#58b24b" /><circle cx="11" cy="26" r="2.500" fill="#4a6fd0" />
                <path d="M32 1c-4 4-7 9-9 15l-3 16 6-15c3-5 5-10 6-16z" fill="#c98a45" />
            </svg>
        </TaskButton>

        <div className="ml-auto flex items-center">
            <svg viewBox="0 0 36 26" className="h-[26px] w-9"><path d="M8 24a7 7 0 0 1 0-13 10 10 0 0 1 19-1 7 7 0 0 1 1 14z" fill="#dbe6f5" /><path d="M8 24a7 7 0 0 1 0-13c8 0 10 9 20 13z" fill="#b3c8e8" /></svg>
            <span className="ml-3 flex w-[143px] gap-3 text-[20px] whitespace-nowrap"><span>12°C</span> <span>Cloudy</span></span>
            <ChevronUp size={24} strokeWidth={1.5} />
            <svg viewBox="0 0 24 24" className="ml-3 h-6 w-6" fill="none" stroke="#fff" strokeWidth="1.500"><path d="M8 7h15v11H8v-4M23 10M4 2v4M8 2v4M2 6h8v3a4 4 0 0 1-8 0zM6 13v5h2" /></svg>
            <Wifi size={24} strokeWidth={1.5} className="ml-[13px]" />
            <Volume2 size={24} strokeWidth={1.5} className="ml-3" />
            <time className="ml-3 w-[100px] text-center text-[16px] leading-[28px]">20:32<br />25/09/2022</time>
            <button aria-label="Notifications" className="relative ml-[22px] w-[60px]">
                <svg viewBox="0 0 26 26" className="h-6 w-6" fill="#fff"><path d="M1 1h24v18H13v6l-6-6H1z" /><path d="M5 6h16M5 10h16M5 14h10" stroke="#24323a" strokeWidth="1.500" /></svg>
                <span className="absolute top-2 left-3 flex h-6 w-6 items-center justify-center rounded-full border border-[#999] bg-[#333d42] text-[15px]">3</span>
            </button>
            <span className="mr-1 h-[60px] w-px bg-[#66757c]" />
        </div>
    </footer>
);

export default function App() {
    return (
        <div className="flex min-h-screen flex-col overflow-hidden bg-[#f0f0f0] font-['Open_Sans','Noto_Sans',sans-serif]">
            <TitleBar />
            <MenuBar />
            <MainToolbar />
            <DrawToolbar />
            <ChartWindow />
            <ChartTabs />
            <Taskbar />
        </div>
    );
}
